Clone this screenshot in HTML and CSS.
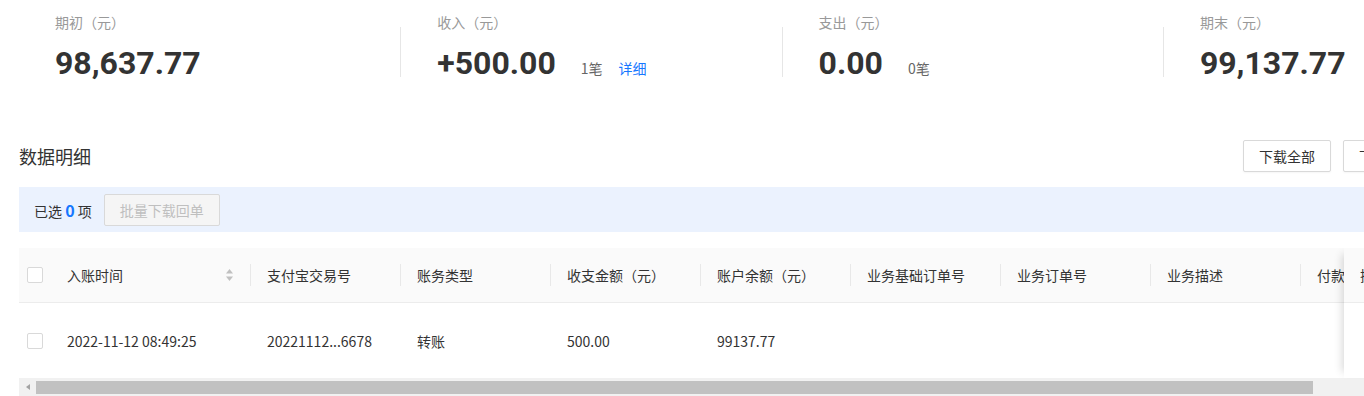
FILE: index.html
```html
<!DOCTYPE html>
<html lang="zh-CN">
<head>
  <meta charset="UTF-8">
  <title>账单明细</title>
  <link rel="stylesheet" href="styles.css">
</head>
<body>
  <div class="page">

    <!-- 汇总 -->
    <div class="stats">
      <div class="stat">
        <div class="stat-body">
          <div class="stat-label">期初（元）</div>
          <div class="stat-row"><span class="stat-num">98,637.77</span></div>
        </div>
      </div>
      <div class="stat">
        <div class="stat-line"></div>
        <div class="stat-body">
          <div class="stat-label">收入（元）</div>
          <div class="stat-row">
            <span class="stat-num">+500.00</span>
            <span class="stat-count">1笔</span>
            <a class="stat-link" href="#">详细</a>
          </div>
        </div>
      </div>
      <div class="stat">
        <div class="stat-line"></div>
        <div class="stat-body">
          <div class="stat-label">支出（元）</div>
          <div class="stat-row">
            <span class="stat-num">0.00</span>
            <span class="stat-count">0笔</span>
          </div>
        </div>
      </div>
      <div class="stat">
        <div class="stat-line"></div>
        <div class="stat-body">
          <div class="stat-label">期末（元）</div>
          <div class="stat-row"><span class="stat-num">99,137.77</span></div>
        </div>
      </div>
    </div>

    <!-- 数据明细 -->
    <div class="toolbar">
      <div class="title">数据明细</div>
      <div class="tool-btns">
        <button class="btn">下载全部</button>
        <button class="btn">下载回单</button>
      </div>
    </div>

    <div class="select-bar">
      <span>已选 <b class="sel-num">0</b> 项</span>
      <button class="btn btn-disabled" disabled>批量下载回单</button>
    </div>

    <div class="table-box">
      <table class="grid">
        <colgroup>
          <col class="c-check">
          <col class="c-time">
          <col class="c-std"><col class="c-std"><col class="c-std"><col class="c-std">
          <col class="c-std"><col class="c-std"><col class="c-std"><col class="c-std">
        </colgroup>
        <thead>
          <tr>
            <th class="cell-check"><span class="checkbox"></span></th>
            <th>
              <div class="th-sort">
                <span>入账时间</span>
                <svg class="sort-icon" width="9" height="14" viewBox="0 0 9 14">
                  <path d="M4.5 1 L8 5.5 L1 5.5 Z" fill="#c0c0c0"/>
                  <path d="M4.5 13 L8 8.5 L1 8.5 Z" fill="#c0c0c0"/>
                </svg>
              </div>
            </th>
            <th>支付宝交易号</th>
            <th>账务类型</th>
            <th>收支金额（元）</th>
            <th>账户余额（元）</th>
            <th>业务基础订单号</th>
            <th>业务订单号</th>
            <th>业务描述</th>
            <th>付款</th>
          </tr>
        </thead>
        <tbody>
          <tr>
            <td class="cell-check"><span class="checkbox"></span></td>
            <td>2022-11-12 08:49:25</td>
            <td>20221112...6678</td>
            <td>转账</td>
            <td>500.00</td>
            <td>99137.77</td>
            <td></td>
            <td></td>
            <td></td>
            <td></td>
          </tr>
        </tbody>
      </table>

      <!-- 右侧固定列 -->
      <div class="fixed-col">
        <div class="fixed-head">操作</div>
        <div class="fixed-body"></div>
      </div>

      <div class="hscroll">
        <span class="hscroll-arrow"></span>
        <span class="hscroll-thumb"></span>
      </div>
    </div>

  </div>
</body>
</html>
```

FILE: styles.css
```css
html, body {
  margin: 0;
  overflow: hidden;
  background: #fff;
}
body {
  font-family: "Noto Sans CJK SC", "Noto Sans", sans-serif;
  font-size: 14px;
  color: #333;
}
.page {
  width: 1412px;
  padding-left: 19px;
}

/* summary */
.stats {
  display: flex;
  padding-top: 11px;
}
.stat {
  width: 381.3px;
  flex: none;
  display: flex;
}
.stat-line {
  width: 1px;
  height: 50px;
  margin-top: 16px;
  background: #e6e6e6;
  flex: none;
}
.stat-body {
  padding-left: 36px;
}
.stat-label {
  font-size: 14px;
  line-height: 22px;
  color: #999;
}
.stat-row {
  display: flex;
  align-items: baseline;
  margin-top: 10px;
}
.stat-num {
  font-family: Roboto, "Noto Sans CJK SC", sans-serif;
  font-size: 32px;
  line-height: 40px;
  font-weight: 700;
  color: #333;
}
.stat-count {
  font-size: 14px;
  color: #666;
  margin-left: 25px;
}
.stat-link {
  font-size: 14px;
  color: #1677ff;
  margin-left: 16px;
  text-decoration: none;
}

/* toolbar */
.toolbar {
  display: flex;
  align-items: center;
  height: 32px;
  margin-top: 57px;
}
.title {
  font-size: 18px;
  line-height: 26px;
  color: #333;
}
.tool-btns {
  margin-left: auto;
  display: flex;
  gap: 12px;
}
.btn {
  height: 32px;
  padding: 0 15px;
  font-family: inherit;
  font-size: 14px;
  color: #333;
  background: #fff;
  border: 1px solid #d9d9d9;
  border-radius: 2px;
  box-shadow: 0 1px 2px rgba(0,0,0,0.04);
}
.btn-disabled {
  color: #bfbfbf;
  background: #f5f5f5;
  box-shadow: none;
}

.select-bar {
  display: flex;
  align-items: center;
  gap: 12px;
  height: 45px;
  margin-top: 15px;
  padding-left: 15px;
  background: #ebf2fe;
}
.sel-num {
  font-size: 16px;
  color: #1677ff;
  font-weight: 700;
}

/* table */
.table-box {
  position: relative;
  margin-top: 16px;
  overflow: hidden;
}
.grid {
  table-layout: fixed;
  width: 1431px;
  border-collapse: collapse;
}
.c-check { width: 31px; }
.c-time { width: 200px; }
.c-std { width: 150px; }

.grid th {
  position: relative;
  height: 54px;
  padding: 0 16px 0 17px;
  background: #fafafa;
  border-bottom: 1px solid #ececec;
  font-weight: normal;
  text-align: left;
  color: #333;
  white-space: nowrap;
  overflow: hidden;
}
.grid th + th + th::before {
  content: "";
  position: absolute;
  left: 0;
  top: 16px;
  width: 1px;
  height: 22px;
  background: #e8e8e8;
}
.grid td {
  height: 75px;
  padding: 0 17px;
  color: #333;
  white-space: nowrap;
}
.grid .cell-check {
  padding: 0 0 0 8px;
}
.checkbox {
  display: block;
  width: 14px;
  height: 14px;
  border: 1px solid #d9d9d9;
  border-radius: 2px;
  background: #fff;
}
.th-sort {
  display: flex;
  align-items: center;
  justify-content: space-between;
}
.sort-icon {
  display: block;
}

.fixed-col {
  position: absolute;
  top: 0;
  left: 1325px;
  width: 140px;
  height: 130px;
  background: #fff;
  box-shadow: -8px 0 8px -6px rgba(0,0,0,0.15);
}
.fixed-head {
  height: 54px;
  line-height: 54px;
  padding-left: 16px;
  background: #fafafa;
  border-bottom: 1px solid #ececec;
}

/* horizontal scrollbar */
.hscroll {
  display: flex;
  align-items: center;
  height: 18px;
  background: #f1f1f1;
}
.hscroll-arrow {
  width: 17px;
  display: flex;
  justify-content: center;
}
.hscroll-arrow::before {
  content: "";
  border-style: solid;
  border-width: 3px 4px 3px 0;
  border-color: transparent #a3a3a3 transparent transparent;
}
.hscroll-thumb {
  width: 1277px;
  height: 13px;
  margin-top: 1px;
  background: #c1c1c1;
}
```
